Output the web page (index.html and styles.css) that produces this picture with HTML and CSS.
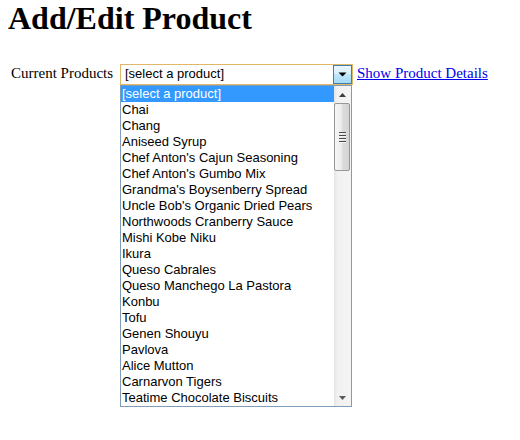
FILE: index.html
```html
<!DOCTYPE html>
<html>
<head>
<meta charset="utf-8">
<title>Add/Edit Product</title>
<link rel="stylesheet" href="styles.css">
</head>
<body>
<h1 class="title">Add/Edit Product</h1>
<div class="row">
  <span class="label">Current Products</span>
  <div class="combo">
    <div class="combo-box">
      <span class="combo-value">[select a product]</span>
      <span class="combo-btn">
        <svg width="9" height="5" viewBox="0 0 9 5"><path d="M0.5 0.5h8L4.5 4.5z" fill="#000"/></svg>
      </span>
    </div>
    <div class="product-list">
      <ul class="options">
        <li class="option picked">[select a product]</li>
        <li class="option">Chai</li>
        <li class="option">Chang</li>
        <li class="option">Aniseed Syrup</li>
        <li class="option">Chef Anton's Cajun Seasoning</li>
        <li class="option">Chef Anton's Gumbo Mix</li>
        <li class="option">Grandma's Boysenberry Spread</li>
        <li class="option">Uncle Bob's Organic Dried Pears</li>
        <li class="option">Northwoods Cranberry Sauce</li>
        <li class="option">Mishi Kobe Niku</li>
        <li class="option">Ikura</li>
        <li class="option">Queso Cabrales</li>
        <li class="option">Queso Manchego La Pastora</li>
        <li class="option">Konbu</li>
        <li class="option">Tofu</li>
        <li class="option">Genen Shouyu</li>
        <li class="option">Pavlova</li>
        <li class="option">Alice Mutton</li>
        <li class="option">Carnarvon Tigers</li>
        <li class="option">Teatime Chocolate Biscuits</li>
      </ul>
      <div class="vbar">
        <span class="vbar-btn">
          <svg width="7" height="4" viewBox="0 0 7 4"><path d="M3.5 0L7 4H0z" fill="#3c3c3c"/></svg>
        </span>
        <div class="track">
          <div class="thumb">
            <span class="grip"></span>
            <span class="grip"></span>
            <span class="grip"></span>
            <span class="grip"></span>
          </div>
        </div>
        <span class="vbar-btn">
          <svg width="7" height="4" viewBox="0 0 7 4"><path d="M0 0H7L3.5 4z" fill="#5a5a5a"/></svg>
        </span>
      </div>
    </div>
  </div>
  <a href="#" class="details">Show Product Details</a>
</div>
</body>
</html>
```
FILE: styles.css
```css
html, body {
  background: #fff;
}
body {
  margin: 0 8px;
  font-family: "Liberation Serif", "Times New Roman", serif;
  color: #000;
}
.title {
  margin: 0;
  font-size: 32px;
  line-height: 37px;
  font-weight: bold;
}
.row {
  display: flex;
  align-items: flex-start;
  margin-top: 27px;
  padding-left: 3px;
}
.label {
  width: 109px;
  font-size: 15px;
  line-height: 18px;
}
.combo {
  width: 233px;
  display: flex;
  flex-direction: column;
}
.combo-box {
  box-sizing: border-box;
  height: 21px;
  border: 1px solid #e0b868;
  display: flex;
  background: #fff;
}
.combo-value {
  flex: 1;
  padding-left: 4px;
  padding-bottom: 1px;
  font-family: "Liberation Sans", Arial, sans-serif;
  font-size: 13px;
  line-height: 18px;
  color: #000;
  white-space: nowrap;
}
.combo-btn {
  box-sizing: border-box;
  width: 19px;
  height: 19px;
  border: 1px solid #3c7fb1;
  background: linear-gradient(to bottom, #eaf6fd 0%, #d9f0fc 45%, #bee6fd 50%, #a7d9f5 100%);
  display: flex;
  align-items: center;
  justify-content: center;
}
.product-list {
  box-sizing: border-box;
  width: 232px;
  height: 322px;
  border: 1px solid #7f9db9;
  background: #fff;
  display: flex;
}
.options {
  flex: 1;
  margin: 0;
  padding: 0;
  list-style: none;
  font-family: "Liberation Sans", Arial, sans-serif;
  font-size: 13px;
}
.option {
  height: 16px;
  line-height: 15px;
  padding-left: 1px;
  white-space: nowrap;
  color: #000;
}
.option.picked {
  background: #3399ff;
  color: #fff;
}
.vbar {
  width: 17px;
  display: flex;
  flex-direction: column;
  background: linear-gradient(to right, #e4e4e4 0%, #f1f1f1 20%, #f4f4f4 100%);
}
.vbar-btn {
  height: 17px;
  display: flex;
  align-items: center;
  justify-content: center;
}
.track {
  flex: 1;
}
.thumb {
  box-sizing: border-box;
  height: 68px;
  margin: 0 1px 0 0;
  border: 1px solid #979797;
  border-radius: 2px;
  background: linear-gradient(to right, #f6f6f6 0%, #ececec 45%, #dcdcdc 55%, #d3d3d3 100%);
  display: flex;
  flex-direction: column;
  align-items: center;
  justify-content: center;
  gap: 1px;
}
.grip {
  display: block;
  width: 7px;
  height: 1px;
  background: #4a4a4a;
  border-bottom: 1px solid #f4f4f4;
}
.details {
  margin-left: 4px;
  font-size: 15px;
  line-height: 18px;
  color: #0000ee;
  text-decoration: underline;
}
```
